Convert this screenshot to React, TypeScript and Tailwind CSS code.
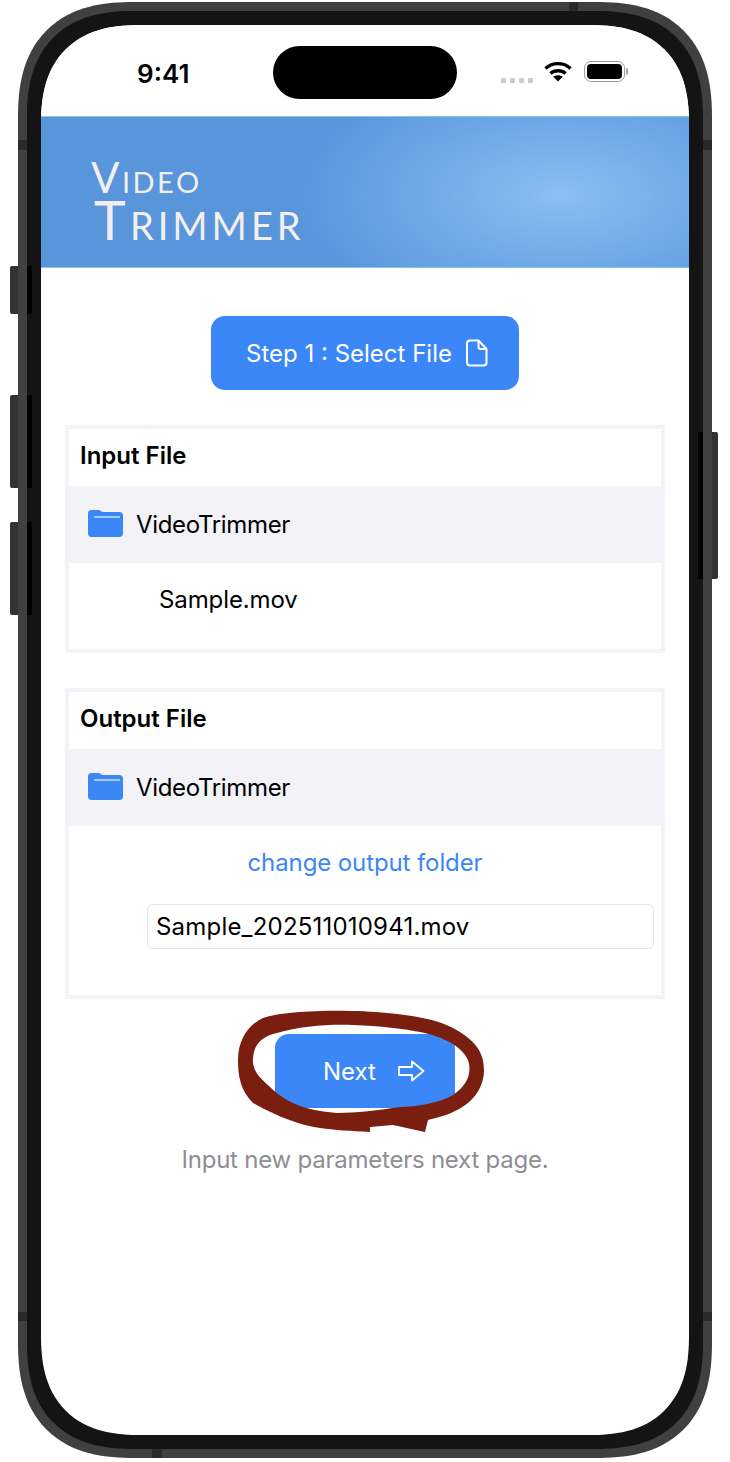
const font = "[font-family:Inter,'Liberation_Sans',sans-serif]"

const FolderIcon = () => (
  <svg width="35" height="27" viewBox="0 0 35 27" className="shrink-0 mb-[3px]">
    <path d="M3 0h7.500c2 0 2.600 2 5 2H31.500c2 0 3.500 1.500 3.500 3.500V23.500c0 2-1.500 3.500-3.500 3.500H3.500C1.500 27 0 25.500 0 23.500V3C0 1.500 1.500 0 3 0z" fill="#3b87f8" />
    <path d="M6 7h26" stroke="#d6e6ff" strokeWidth="1.400" fill="none" />
  </svg>
)

const FileIcon = () => (
  <svg width="22" height="28" viewBox="0 0 22 28" fill="none" stroke="white" strokeWidth="2" strokeLinejoin="round">
    <path d="M4 1.500h8.500l8 8.500v13.500c0 1.800-1.200 3-3 3H4c-1.800 0-3-1.200-3-3v-19c0-1.800 1.200-3 3-3z" />
    <path d="M12.500 1.500V8c0 1.300 .7 2 2 2h6" />
  </svg>
)

const ArrowIcon = () => (
  <svg width="27" height="22" viewBox="0 0 27 22" fill="none" stroke="white" strokeWidth="1.800" strokeLinejoin="round">
    <path d="M1 7h13V1.500L25.500 11 14 20.500V15H1z" />
  </svg>
)

const StatusBar = () => (
  <div className="h-[91px] shrink-0 flex items-center bg-white pl-[96px]">
    <span className="w-[136px] mt-[7px] text-[26px] font-semibold text-black leading-none">9:41</span>
    <div className="w-[184px] h-[53px] mt-[4px] rounded-full bg-black" />
    <div className="flex items-center ml-[44px] mt-[5px]">
      <div className="flex gap-[4px] mt-[14px]">
        <div className="w-[5px] h-[5px] rounded-[1px] bg-[#cccccc]" />
        <div className="w-[5px] h-[5px] rounded-[1px] bg-[#cccccc]" />
        <div className="w-[5px] h-[5px] rounded-[1px] bg-[#cccccc]" />
        <div className="w-[5px] h-[5px] rounded-[1px] bg-[#cccccc]" />
      </div>
      <svg width="28" height="21" viewBox="0 0 28 21" fill="none" stroke="black" strokeWidth="3.400" className="ml-[11px] mb-[4px]">
        <path d="M1.500 7.500C8.500 1 19.500 1 26.500 7.500" />
        <path d="M6.500 12.500c4-3.600 11-3.600 15 0" />
        <path d="M14 20.500l-4.800-4.800c2.500-2 7.100-2 9.600 0z" fill="black" stroke="none" />
      </svg>
      <div className="ml-[12px] mb-[4px] flex items-center">
        <div className="w-[41px] h-[21px] rounded-[7px] border-[1.500px] border-[#9a9a9a] p-[2px]">
          <div className="w-full h-full rounded-[4px] bg-black" />
        </div>
        <div className="w-[2px] h-[7px] rounded-r-full bg-[#a0a0a0] ml-[1px]" />
      </div>
    </div>
  </div>
)

const Header = () => (
  <div className="h-[152px] shrink-0 border-y border-[#8ac4ee] bg-[radial-gradient(ellipse_265px_135px_at_520px_78px,#8cbdf6_0%,#6ea8e6_55%,#5995db_100%)] pl-[50px] pt-[42px] [font-family:Lato,sans-serif] text-[#f2efef] [font-variant:small-caps]">
    <div className="text-[42px] leading-[36px] tracking-[2.500px]">Video</div>
    <div className="text-[54px] leading-[50px] pl-[3px] tracking-[4px]">Trimmer</div>
  </div>
)

const Card = ({ title, children }: { title: string; children: React.ReactNode }) => (
  <section className="border-4 border-[#f2f2f7] bg-white">
    <h2 className="h-[57px] flex items-center pl-[11px] pb-[4px] text-[24px] font-semibold text-black">{ title }</h2>
    <div className="h-[77px] bg-[#f2f2f7] flex items-center pl-[19px] gap-[13px] text-[24px] tracking-[-0.330px] text-black">
      <FolderIcon />
      <span>VideoTrimmer</span>
    </div>
    { children }
  </section>
)

export default function App() {
  return (
    <div className={ `relative w-[730px] h-[1462px] bg-white overflow-hidden pt-[2px] pl-[18px] ${ font }` }>

      {/* side buttons */}
      <div className="absolute left-[10px] top-[266px] w-[9px] h-[48px] bg-[#333333] rounded-l-[2px]" />
      <div className="absolute left-[10px] top-[395px] w-[9px] h-[93px] bg-[#333333] rounded-l-[2px]" />
      <div className="absolute left-[10px] top-[522px] w-[9px] h-[93px] bg-[#333333] rounded-l-[2px]" />
      <div className="absolute left-[711px] top-[432px] w-[7px] h-[147px] bg-[#333333] rounded-r-[2px]" />

      <div className="relative w-[694px] h-[1456px] rounded-[116px] [corner-shape:superellipse(1.300)] border-[9px] border-[#404040] bg-[#141414] p-[14px]">
        <div className="h-full rounded-[100px] [corner-shape:superellipse(1.300)] bg-white overflow-hidden flex flex-col">
          <StatusBar />
          <Header />

          <main className="flex flex-col items-center pt-[48px]">
            <button className="w-[308px] h-[74px] pl-[4px] rounded-[14px] bg-[#3b87f8] text-white text-[24px] flex items-center justify-center gap-[14px]">
              <span className="mt-[2px]">Step 1 : Select File</span>
              <FileIcon />
            </button>

            <div className="w-[600px] mt-[35px] flex flex-col gap-[35px]">
              <Card title="Input File">
                <div className="h-[86px] pl-[90px] pt-[19px] text-[24px] tracking-[-0.100px] text-black leading-[36px]">Sample.mov</div>
              </Card>

              <Card title="Output File">
                <div className="h-[169px] flex flex-col">
                  <a className="text-center text-[24px] tracking-[-0.100px] text-[#3b87f8] mt-[19px] leading-[36px]">change output folder</a>
                  <div className="ml-[78px] mr-[7px] mt-[23px] h-[45px] rounded-[6px] border border-[#e5e5ea] flex items-center pl-[8px] text-[24px] tracking-[0.200px] text-black">
                    Sample_202511010941.mov
                  </div>
                </div>
              </Card>
            </div>

            <button className="w-[180px] h-[74px] mt-[35px] pl-[18px] rounded-[14px] bg-[#3b87f8] text-white text-[24px] flex items-center justify-center gap-[22px]">
              <span className="mt-[2px]">Next</span>
              <ArrowIcon />
            </button>

            <p className="mt-[34px] text-[24px] tracking-[-0.230px] text-[#8e8e93] leading-[36px]">Input new parameters next page.</p>
          </main>
        </div>
      </div>

      {/* shade behind the side buttons */}
      <div className="absolute left-[27px] top-[266px] w-[5px] h-[48px] bg-black" />
      <div className="absolute left-[27px] top-[395px] w-[5px] h-[93px] bg-black" />
      <div className="absolute left-[27px] top-[522px] w-[5px] h-[93px] bg-black" />
      <div className="absolute left-[698px] top-[432px] w-[5px] h-[147px] bg-black" />

      {/* antenna bands */}
      <div className="absolute left-[18px] top-[140px] w-[9px] h-[10px] bg-[#2a2a2a]" />
      <div className="absolute left-[18px] top-[1312px] w-[9px] h-[9px] bg-[#2a2a2a]" />
      <div className="absolute left-[703px] top-[140px] w-[9px] h-[10px] bg-[#2a2a2a]" />
      <div className="absolute left-[703px] top-[1312px] w-[9px] h-[9px] bg-[#2a2a2a]" />
      <div className="absolute left-[569px] top-[2px] w-[9px] h-[9px] bg-[#2a2a2a]" />
      <div className="absolute left-[152px] top-[1449px] w-[10px] h-[9px] bg-[#2a2a2a]" />

      {/* hand drawn circle round the Next button */}
      <svg className="absolute left-0 top-0 pointer-events-none" width="730" height="1462">
        <path
          fill="#7a1f0f"
          fillRule="evenodd"
          d="M238 1060C238 1040 248 1025 263 1018C285 1010 350 1009 387 1013C420 1016 440 1021 453 1028C475 1040 484 1052 484 1070C484 1090 470 1105 453 1112C445 1116 435 1118 428 1120L425 1132L393 1125L370 1127L370 1132C350 1131 335 1130 320 1128C300 1125 280 1118 253 1103C240 1090 238 1075 238 1060Z
          M253 1063C252 1045 262 1036 277 1033C300 1026 330 1024 353 1025C380 1026 405 1029 420 1032C445 1037 462 1047 468 1060C472 1072 468 1085 453 1095C440 1103 415 1107 400 1107C380 1110 355 1113 337 1113C325 1112 312 1110 303 1107C290 1103 278 1095 270 1087C260 1078 254 1072 253 1063Z"
        />
      </svg>
    </div>
  )
}
